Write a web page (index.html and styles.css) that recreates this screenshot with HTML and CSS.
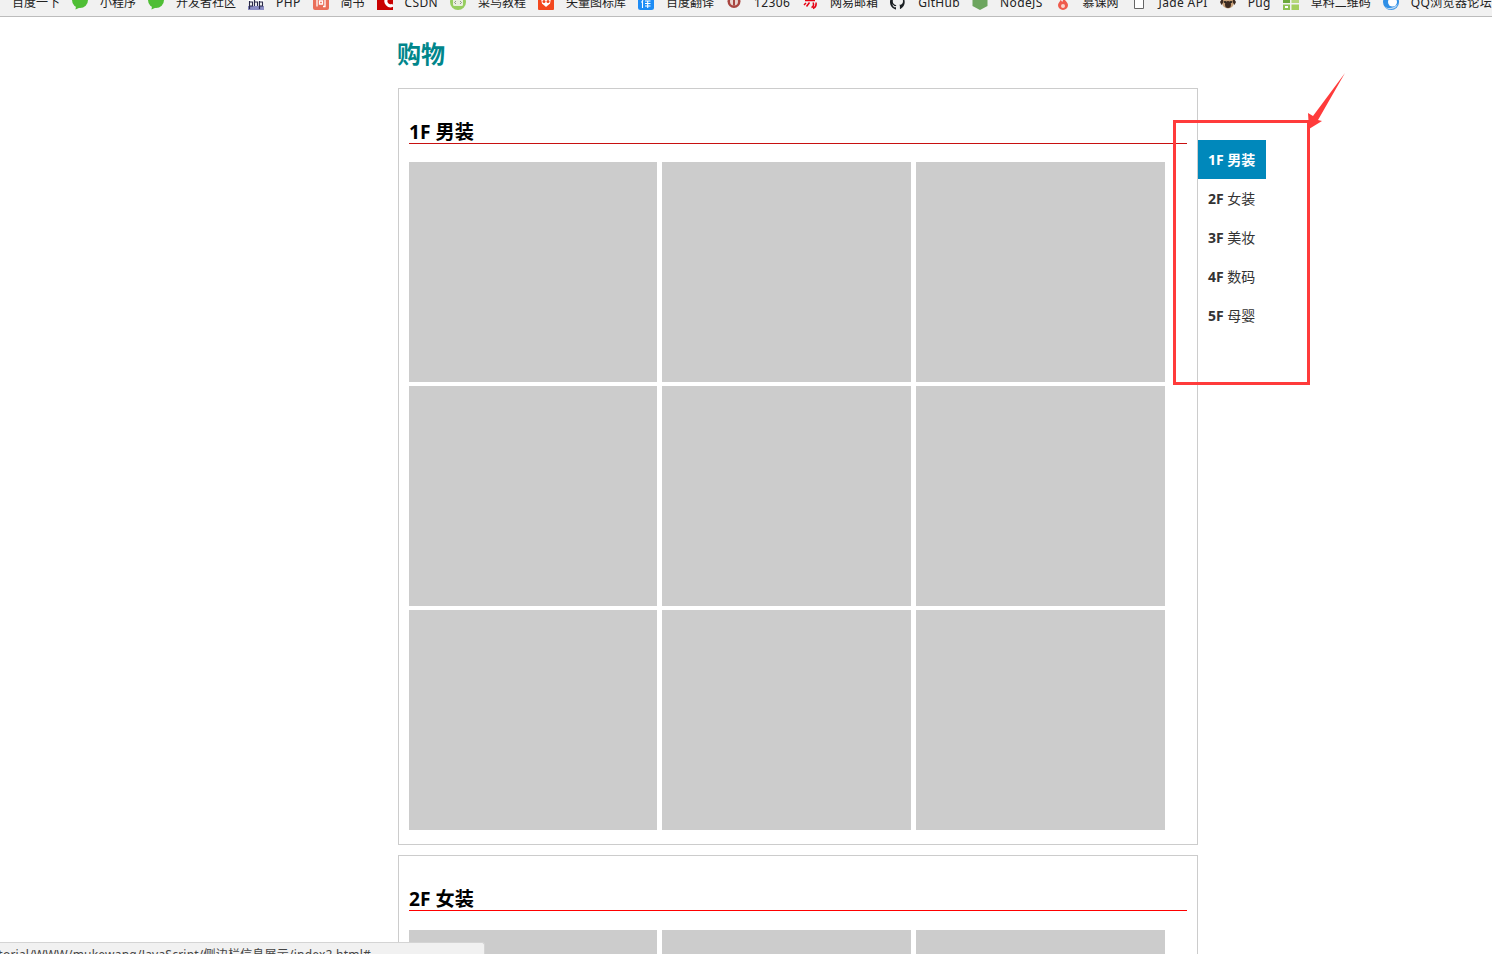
FILE: index.html
```html
<!DOCTYPE html>
<html lang="zh-CN">
<head>
<meta charset="utf-8">
<title>购物</title>
<link rel="stylesheet" href="styles.css">
</head>
<body>
<nav class="bookmarks">
  <span class="bm-label">百度一下</span>
  <svg class="bm-icon" viewBox="0 -6 16 16"><ellipse cx="8" cy="0" rx="8" ry="8" fill="#4fbe35"/><path d="M4 6l-.5 3.500L8 7.500z" fill="#4fbe35"/></svg>
  <span class="bm-label">小程序</span>
  <svg class="bm-icon" viewBox="0 -6 16 16"><ellipse cx="8" cy="0" rx="8" ry="8" fill="#4fbe35"/><path d="M4 6l-.5 3.500L8 7.500z" fill="#4fbe35"/></svg>
  <span class="bm-label">开发者社区</span>
  <svg class="bm-icon" viewBox="0 -6 16 16"><rect y="-6" width="16" height="12" fill="#fff"/><rect y="6" width="16" height="4" fill="#8a8cc4"/><path d="M1.500 1v8M1.500 2h3v4h-3M6.500 -1v7M6.500 2h3v4M11.500 1v8M11.500 2h3v4h-3" fill="none" stroke="#2b2b4a" stroke-width="1.200"/></svg>
  <span class="bm-label bm-latin">PHP</span>
  <svg class="bm-icon" viewBox="0 0 16 16"><rect width="16" height="16" rx="2" fill="#ea6f5a"/><path d="M4 3.500v9M4 3.500h8v9h-2M6.500 7h3v3h-3z" fill="none" stroke="#fff" stroke-width="1.300"/></svg>
  <span class="bm-label">简书</span>
  <svg class="bm-icon" viewBox="0 0 16 16"><rect width="16" height="16" fill="#c90000"/><path d="M16 3.500a4.500 4.500 0 1 0 0 7.500" fill="none" stroke="#fff" stroke-width="3"/></svg>
  <span class="bm-label bm-latin">CSDN</span>
  <svg class="bm-icon" viewBox="0 -6 16 16"><circle cx="8" cy="2" r="8" fill="#96ce5f"/><rect x="3" y="-2" width="10" height="8" rx="1.500" fill="#e8efdc"/><path d="M6 1l-1.500 1.500L6 4M10 1l1.500 1.500L10 4" fill="none" stroke="#777" stroke-width=".8"/></svg>
  <span class="bm-label">菜鸟教程</span>
  <svg class="bm-icon" viewBox="0 0 16 16"><rect width="16" height="16" rx="1" fill="#f3481e"/><path d="M8 1.500l5 3-1 5-4 3.500-4-3.500-1-5z" fill="#fff"/><circle cx="6" cy="7.500" r="1.500" fill="#f3481e"/><circle cx="10" cy="7.500" r="1.500" fill="#f3481e"/></svg>
  <span class="bm-label">矢量图标库</span>
  <svg class="bm-icon" viewBox="0 -6 16 16"><rect y="-6" width="16" height="16" rx="2.500" fill="#1d8cf5"/><path d="M5 0L3.500 2.500M4.500 1.500V8M7 1h5.500M7 3.500h5.500M7 6h5.500M9.700 1v7" fill="none" stroke="#fff" stroke-width="1.100"/></svg>
  <span class="bm-label">百度翻译</span>
  <svg class="bm-icon" viewBox="0 -6 16 16"><circle cx="8" cy="1.500" r="6.500" fill="#a9453f"/><circle cx="8" cy="1.500" r="4" fill="#e8d5d0"/><rect x="7" y="-2" width="2" height="7.500" fill="#a9453f"/></svg>
  <span class="bm-label bm-latin">12306</span>
  <svg class="bm-icon" viewBox="0 0 16 16"><path d="M3 3.500h10M3 6.500h10M4 9l-2 2M7.500 8.500l-3 4M11 8.500c1 2 .5 4-1.500 5M14 8.500c.5 3-.5 5-3 6" fill="none" stroke="#e60012" stroke-width="1.500"/></svg>
  <span class="bm-label">网易邮箱</span>
  <svg class="bm-icon" viewBox="0 0 16 16"><path d="M8 0a8 8 0 0 0-2.500 15.600c.4.100.5-.2.500-.4v-2c-2.200.5-2.700-1-2.700-1-.4-.9-.9-1.200-.9-1.200-.7-.5 0-.5 0-.5.800.100 1.200.8 1.200.8.700 1.200 1.900.9 2.300.7.100-.5.300-.9.500-1.100-1.800-.2-3.600-.9-3.600-4 0-.9.300-1.600.8-2.100-.1-.2-.4-1 .1-2.100 0 0 .7-.2 2.200.8a7.600 7.600 0 0 1 4 0c1.500-1 2.200-.8 2.200-.8.400 1.100.2 1.900.1 2.100.5.600.8 1.300.8 2.100 0 3.100-1.900 3.700-3.700 3.900.3.300.6.800.6 1.500v2.200c0 .2.100.5.600.4A8 8 0 0 0 8 0z" fill="#1b1f23"/></svg>
  <span class="bm-label bm-latin">GitHub</span>
  <svg class="bm-icon" viewBox="0 0 16 16"><path d="M8 0l7.500 4v8L8 16 .5 12V4z" fill="#6da55f"/></svg>
  <span class="bm-label bm-latin">NodeJS</span>
  <svg class="bm-icon" viewBox="0 -6 16 16"><path d="M8-3C9 0 13 2 13 5A5 5 0 0 1 3 5C3 3 5 2 5.500 0 6.500.5 7 1.500 7 2 8 1 8.500-1 8-3z" fill="#ef5a4c"/><circle cx="8" cy="6" r="2" fill="#fbd5cc"/></svg>
  <span class="bm-label">慕课网</span>
  <svg class="bm-icon" viewBox="0 -6 16 16"><path d="M3.500-2V8.500h9V-2" fill="#fff" stroke="#666"/></svg>
  <span class="bm-label bm-latin">Jade API</span>
  <svg class="bm-icon" viewBox="0 -6 16 16"><ellipse cx="8" cy="2.500" rx="6" ry="6" fill="#c9a27a"/><path d="M2.500-2L0 2l1.500 3 2-3zM13.500-2L16 2l-1.500 3-2-3z" fill="#3c2a20"/><ellipse cx="8" cy="4.500" rx="3" ry="3.500" fill="#3c2a20"/><circle cx="5" cy="2" r="1" fill="#111"/><circle cx="11" cy="2" r="1" fill="#111"/></svg>
  <span class="bm-label bm-latin">Pug</span>
  <svg class="bm-icon" viewBox="0 -6 16 16"><rect y="-2" width="7" height="5" fill="#6ca83c"/><rect x="8.500" y="-2" width="7.500" height="5" fill="#b6d77c"/><rect y="4.500" width="7" height="5.500" fill="#8cc152"/><rect x="8.500" y="4.500" width="7.500" height="5.500" fill="#a4cf5e"/><rect x="2" y="6" width="3" height="2" fill="#fff"/></svg>
  <span class="bm-label">草料二维码</span>
  <svg class="bm-icon" viewBox="0 -6 16 16"><circle cx="8" cy="2" r="8" fill="#2f8fe6"/><circle cx="9.500" cy="2" r="4.500" fill="#fff"/><path d="M1 6c3 3 9 3 14-2-2 6-10 7-14 2z" fill="#bcd9f3"/></svg>
  <span class="bm-label bm-latin">QQ浏览器论坛</span>
</nav>

<div class="page">
  <main class="shop">
    <h1 class="shop-title">购物</h1>

    <section class="floor">
      <h2 class="floor-title">1F 男装</h2>
      <div class="floor-grid">
        <div class="cell"></div><div class="cell"></div><div class="cell"></div>
        <div class="cell"></div><div class="cell"></div><div class="cell"></div>
        <div class="cell"></div><div class="cell"></div><div class="cell"></div>
      </div>
    </section>

    <section class="floor">
      <h2 class="floor-title floor-title-bright">2F 女装</h2>
      <div class="floor-grid">
        <div class="cell"></div><div class="cell"></div><div class="cell"></div>
      </div>
    </section>
  </main>

  <ul class="floor-nav">
    <li class="floor-link floor-link-active">1F <span class="floor-name">男装</span></li>
    <li class="floor-link">2F <span class="floor-name">女装</span></li>
    <li class="floor-link">3F <span class="floor-name">美妆</span></li>
    <li class="floor-link">4F <span class="floor-name">数码</span></li>
    <li class="floor-link">5F <span class="floor-name">母婴</span></li>
  </ul>
</div>

<div class="mark-box"></div>
<svg class="mark-arrow" viewBox="0 0 50 70"><polygon points="50,3 23,50 27,51 14,59 13,43 18,46" fill="#ff3b3b"/></svg>

<div class="status"><span class="status-text">tutorial/WWW/mukewang/JavaScript/侧边栏信息展示/index2.html#</span></div>
</body>
</html>
```
FILE: styles.css
```css
* { box-sizing: border-box; }

html, body {
  margin: 0;
  height: 954px;
  overflow: hidden;
  background: #fff;
  font-family: "Open Sans", "Noto Sans CJK SC", sans-serif;
}

.bookmarks {
  display: flex;
  align-items: center;
  gap: 12px;
  height: 17px;
  padding: 0 0 0 12px;
  overflow: hidden;
  background: #f1f1f1;
  border-bottom: 1px solid #bcbcbc;
  font-family: "Noto Sans", "Noto Sans CJK SC", sans-serif;
  font-size: 12px;
  line-height: 16px;
  color: #222;
  white-space: nowrap;
}

.bm-icon {
  flex: none;
  width: 16px;
  height: 16px;
  margin-top: -12px;
}

.bm-label {
  flex: none;
  margin-top: -11px;
}

.bm-latin {
  letter-spacing: .35px;
}

.page {
  display: flex;
  align-items: flex-start;
  padding-left: 398px;
}

.shop {
  flex: none;
  width: 800px;
}

.shop-title {
  height: 71px;
  margin: 0 0 0 -1px;
  padding-top: 20px;
  font-size: 24px;
  line-height: 34px;
  font-weight: 700;
  color: #00868b;
}

.floor {
  margin-bottom: 10px;
  padding: 0 10px 14px;
  border: 1px solid #ccc;
}

.floor-title {
  height: 25px;
  margin: 30px 0 18px;
  border-bottom: 1px solid #c81010;
  font-size: 19.200px;
  line-height: 26px;
  font-weight: 700;
  color: #000;
}

.floor-title-bright {
  margin-bottom: 19px;
  border-bottom-color: #f00;
}

.floor-grid {
  display: grid;
  grid-template-columns: 248px 249px 249px;
  grid-auto-rows: 220px;
  gap: 4px 5px;
}

.cell {
  background: #ccc;
}

.floor-nav {
  flex: none;
  width: 68px;
  margin: 123px 0 0;
  padding: 0;
  list-style: none;
}

.floor-link {
  height: 39px;
  padding-left: 10px;
  font-size: 14px;
  line-height: 39px;
  font-weight: 700;
  color: #333;
}

.floor-name {
  font-weight: 400;
}

.floor-link-active {
  background: #0088bb;
  color: #fff;
}

.floor-link-active .floor-name {
  font-weight: 700;
}

.mark-box {
  position: absolute;
  left: 1173px;
  top: 120px;
  width: 137px;
  height: 265px;
  border: 3.500px solid #ff3b3b;
}

.mark-arrow {
  position: absolute;
  left: 1295px;
  top: 70px;
  width: 50px;
  height: 70px;
}

.status {
  position: absolute;
  left: 0;
  top: 942px;
  display: flex;
  width: 485px;
  height: 12px;
  padding-right: 113px;
  justify-content: flex-end;
  overflow: hidden;
  background: #f1f1f1;
  border: 1px solid #d4d4d4;
  border-width: 1px 1px 0 0;
  border-top-right-radius: 3px;
  font-family: "Noto Sans", "Noto Sans CJK SC", sans-serif;
  font-size: 12px;
  line-height: 24px;
  letter-spacing: .22px;
  color: #444;
  white-space: nowrap;
}

.status-text {
  flex: none;
}
```
